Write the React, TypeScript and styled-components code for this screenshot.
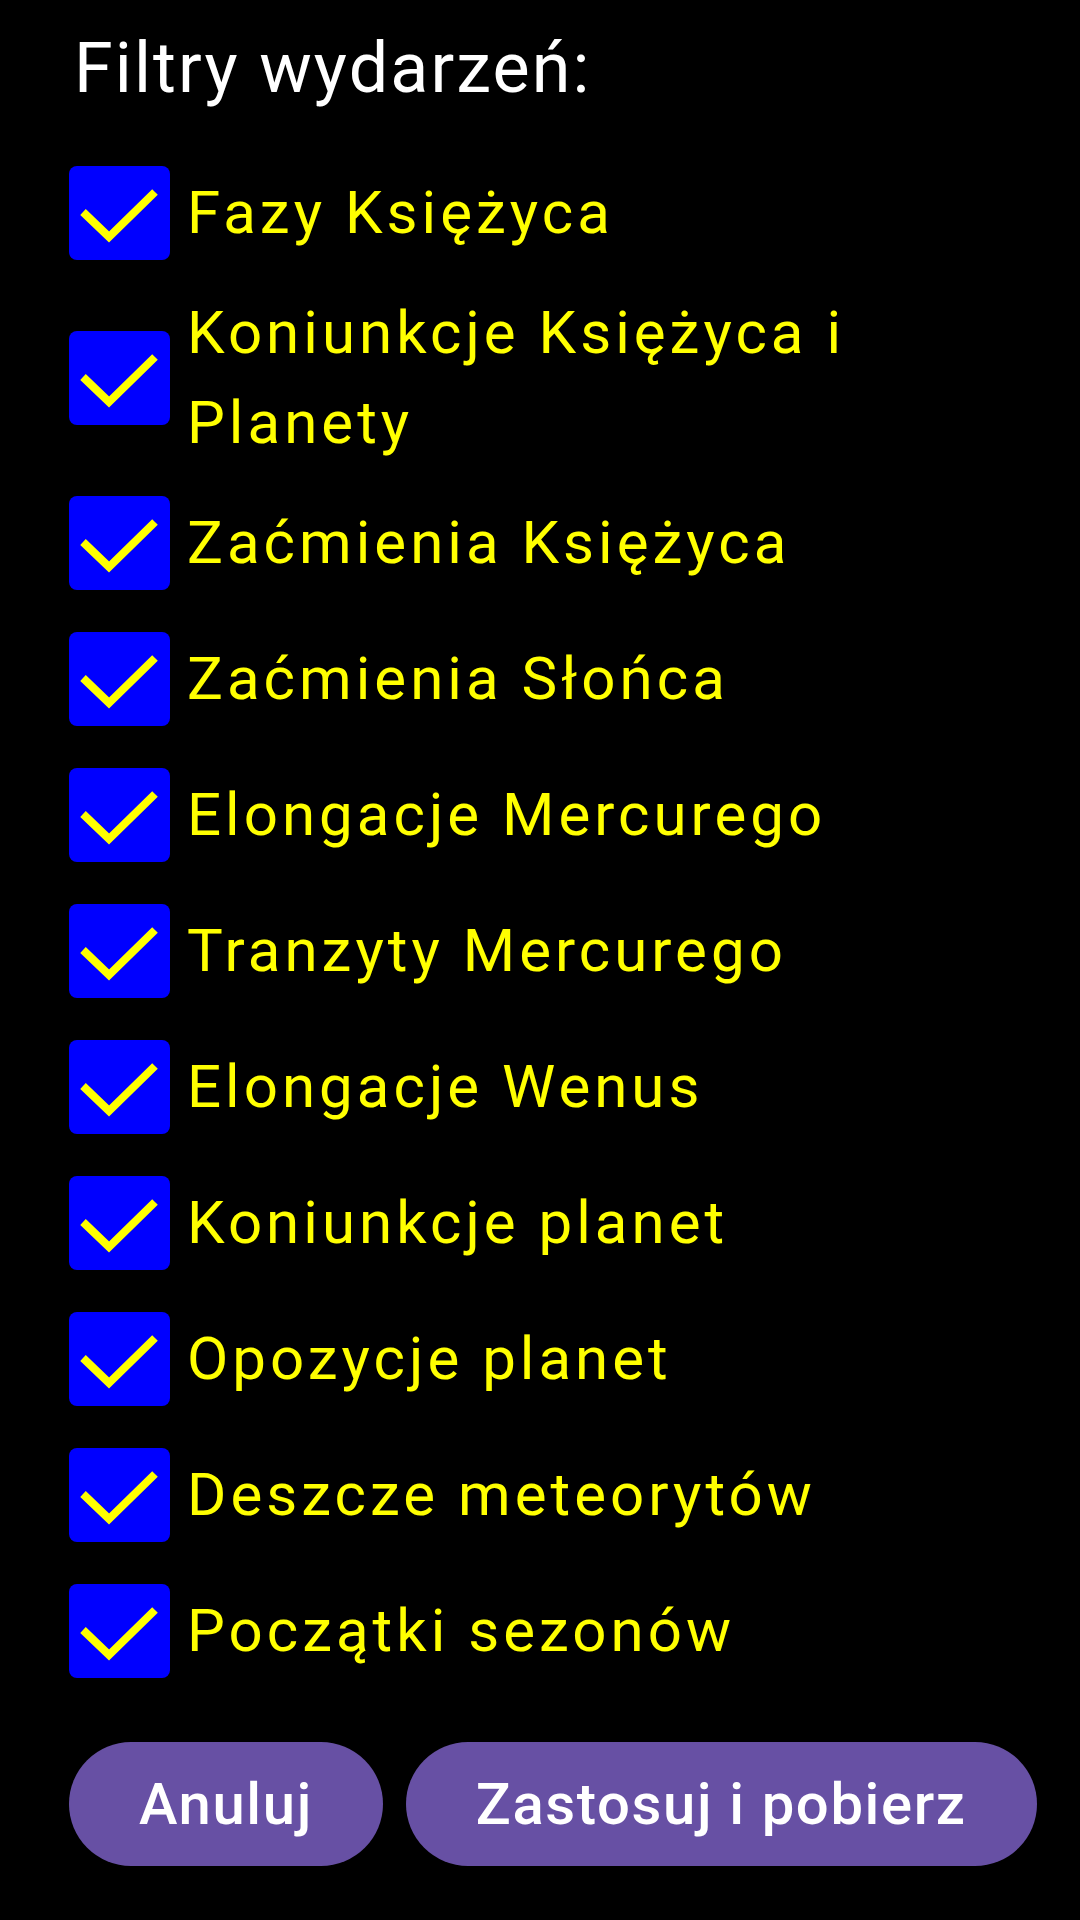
import styled, { createGlobalStyle } from "styled-components";

const GlobalStyle = createGlobalStyle`
  html, body {
    margin: 0;
    padding: 0;
    background: #000;
  }
  body {
    font-family: Roboto, "Noto Sans", "Liberation Sans", sans-serif;
  }
`;

const Screen = styled.div`
  width: 1080px;
  min-height: 1920px;
  box-sizing: border-box;
  padding: 33px 45px 0 69px;
  background: #000;
`;

const Title = styled.h1`
  margin: 0 0 42px 5px;
  font-size: 70px;
  line-height: 1;
  font-weight: 400;
  letter-spacing: 0.03em;
  color: #fff;
`;

const List = styled.div`
  display: flex;
  flex-direction: column;
`;

const Row = styled.label`
  display: flex;
  align-items: center;
  gap: 17px;
  min-height: 136px;
`;

const Box = styled.span<{ $checked: boolean }>`
  flex: 0 0 auto;
  width: 101px;
  height: 94px;
  border-radius: 8px;
  background: ${(p) => (p.$checked ? "#0000ff" : "transparent")};
  display: flex;
  align-items: center;
  justify-content: center;
`;

const Label = styled.span`
  padding: 7px 0;
  font-size: 60px;
  line-height: 90px;
  letter-spacing: 0.067em;
  color: #ffff00;
`;

const Actions = styled.div`
  display: flex;
  gap: 23px;
  margin-top: 43px;
`;

const Button = styled.button`
  flex: 0 0 auto;
  height: 124px;
  padding: 0 70px;
  border: none;
  border-radius: 62px;
  background: #6750a4;
  color: #fff;
  font-family: Roboto, "Noto Sans", "Liberation Sans", sans-serif;
  font-size: 58px;
  font-weight: 500;
  letter-spacing: 0.028em;
  white-space: nowrap;
`;

const filters = [
  "Fazy Księżyca",
  "Koniunkcje Księżyca i Planety",
  "Zaćmienia Księżyca",
  "Zaćmienia Słońca",
  "Elongacje Mercurego",
  "Tranzyty Mercurego",
  "Elongacje Wenus",
  "Koniunkcje planet",
  "Opozycje planet",
  "Deszcze meteorytów",
  "Początki sezonów",
];

function Check() {
  return (
    <svg width="101" height="94" viewBox="0 0 101 94">
      <polyline
        points="14,46 40,71 86,26"
        fill="none"
        stroke="#ffff00"
        strokeWidth="8"
      />
    </svg>
  );
}

export default function App() {
  return (
    <>
      <GlobalStyle />
      <Screen>
        <Title>Filtry wydarzeń:</Title>
        <List>
          {filters.map((f) => (
            <Row key={f}>
              <Box $checked>
                <Check />
              </Box>
              <Label>{f}</Label>
            </Row>
          ))}
        </List>
        <Actions>
          <Button>Anuluj</Button>
          <Button>Zastosuj i pobierz</Button>
        </Actions>
      </Screen>
    </>
  );
}
